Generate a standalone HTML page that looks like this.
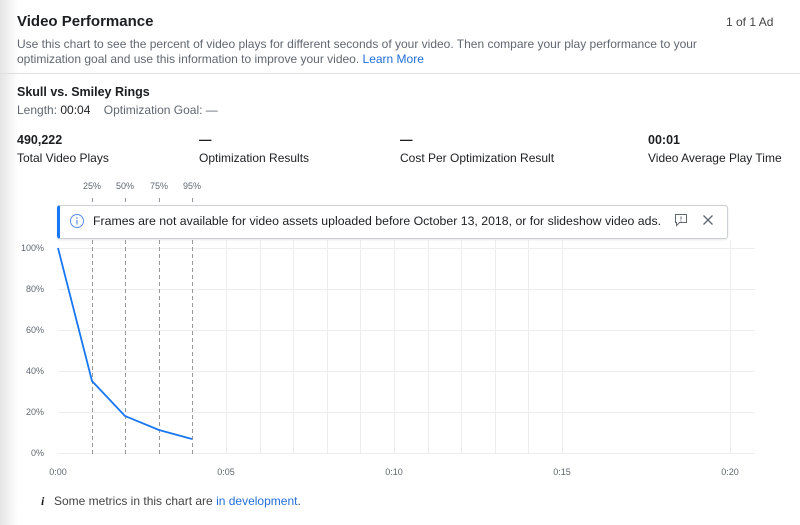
<!DOCTYPE html>
<html><head><style>
body{margin:0;width:800px;height:525px;overflow:hidden;background:#fff;font-family:"Liberation Sans",sans-serif;color:#1c1e21;position:relative}
.sh{position:absolute;left:0;top:0;width:18px;height:525px;background:linear-gradient(90deg,#e4e4e4,#fff)}
.a{position:absolute;white-space:nowrap}
.g{color:#606770}
.b{font-weight:bold}
a{color:#216fdb;text-decoration:none}
</style></head><body>
<div class="sh"></div>
<div class="a b" style="left:17px;top:13px;font-size:15px">Video Performance</div>
<div class="a" style="left:726px;top:15px;font-size:12px;color:#444">1 of 1 Ad</div>
<div class="a g" style="left:17px;top:37px;font-size:12px;line-height:15px">Use this chart to see the percent of video plays for different seconds of your video. Then compare your play performance to your<br>optimization goal and use this information to improve your video. <a>Learn More</a></div>
<div class="a" style="left:0;top:73px;width:800px;height:1px;background:#dddfe2"></div>
<div class="a b" style="left:17px;top:85px;font-size:12.5px">Skull vs. Smiley Rings</div>
<div class="a g" style="left:17px;top:103px;font-size:12px">Length: <span style="color:#1c1e21">00:04</span> &nbsp;&nbsp; Optimization Goal: —</div>
<div class="a b" style="left:17px;top:133px;font-size:12.5px">490,222</div>
<div class="a" style="left:17px;top:151px;font-size:12px">Total Video Plays</div>
<div class="a b" style="left:199px;top:133px;font-size:12.5px">—</div>
<div class="a" style="left:199px;top:151px;font-size:12px">Optimization Results</div>
<div class="a b" style="left:400px;top:133px;font-size:12.5px">—</div>
<div class="a" style="left:400px;top:151px;font-size:12px">Cost Per Optimization Result</div>
<div class="a b" style="left:648px;top:133px;font-size:12.5px">00:01</div>
<div class="a" style="left:648px;top:151px;font-size:12px">Video Average Play Time</div>
<svg class="a" style="left:0;top:0" width="800" height="525">
<g stroke="#ededed" stroke-width="1">
<line x1="58" y1="248.5" x2="755" y2="248.5"/><line x1="58" y1="289.5" x2="755" y2="289.5"/><line x1="58" y1="330.5" x2="755" y2="330.5"/><line x1="58" y1="371.5" x2="755" y2="371.5"/><line x1="58" y1="412.5" x2="755" y2="412.5"/><line x1="58" y1="453.5" x2="755" y2="453.5"/>
<line x1="226.5" y1="240" x2="226.5" y2="453"/><line x1="260.5" y1="240" x2="260.5" y2="453"/><line x1="293.5" y1="240" x2="293.5" y2="453"/><line x1="327.5" y1="240" x2="327.5" y2="453"/><line x1="360.5" y1="240" x2="360.5" y2="453"/><line x1="394.5" y1="240" x2="394.5" y2="453"/><line x1="428.5" y1="240" x2="428.5" y2="453"/><line x1="461.5" y1="240" x2="461.5" y2="453"/><line x1="495.5" y1="240" x2="495.5" y2="453"/><line x1="528.5" y1="240" x2="528.5" y2="453"/><line x1="562.5" y1="240" x2="562.5" y2="453"/><line x1="730.5" y1="240" x2="730.5" y2="453"/>
</g>
<g stroke="#999" stroke-dasharray="4,3" stroke-width="1">
<line x1="92.5" y1="198" x2="92.5" y2="454"/><line x1="125.5" y1="198" x2="125.5" y2="454"/><line x1="159.5" y1="198" x2="159.5" y2="454"/><line x1="192.5" y1="198" x2="192.5" y2="454"/>
</g>
<polyline points="58,248 92,381 125,416 159,430 192,439" fill="none" stroke="#1877f2" stroke-width="1.8"/>
<g font-family="Liberation Sans" font-size="9" fill="#606770">
<g text-anchor="middle"><text x="92" y="189">25%</text><text x="125" y="189">50%</text><text x="159" y="189">75%</text><text x="192" y="189">95%</text></g>
<g text-anchor="end"><text x="44" y="251">100%</text><text x="44" y="292">80%</text><text x="44" y="333">60%</text><text x="44" y="374">40%</text><text x="44" y="415">20%</text><text x="44" y="456">0%</text></g>
<g text-anchor="middle"><text x="58" y="475">0:00</text><text x="226" y="475">0:05</text><text x="394" y="475">0:10</text><text x="562" y="475">0:15</text><text x="730" y="475">0:20</text></g>
</g>
</svg>
<div class="a" style="left:57px;top:205px;width:667px;height:32px;background:#fff;border:1px solid #ccd0d5;border-left:3px solid #1877f2;border-radius:3px;box-shadow:0 1px 2px rgba(0,0,0,.1)"></div>
<svg class="a" style="left:69px;top:213px" width="16" height="16"><circle cx="8" cy="8" r="6.5" fill="none" stroke="#5b8def" stroke-width="1"/><line x1="8" y1="7" x2="8" y2="11.5" stroke="#5b8def" stroke-width="1.2"/><circle cx="8" cy="5" r=".8" fill="#5b8def"/></svg>
<div class="a" style="left:93px;top:214px;font-size:12.3px">Frames are not available for video assets uploaded before October 13, 2018, or for slideshow video ads.</div>
<svg class="a" style="left:674px;top:213px" width="14" height="14"><path d="M1.5 1.5h11v8h-7l-3 3v-3h-1z" fill="none" stroke="#606770"/><line x1="7" y1="3.5" x2="7" y2="6.5" stroke="#606770"/><circle cx="7" cy="8" r=".6" fill="#606770"/></svg>
<svg class="a" style="left:702px;top:214px" width="12" height="12"><path d="M1.5 1.5l9 9M10.5 1.5l-9 9" stroke="#606770" stroke-width="1.3"/></svg>
<div class="a" style="left:41px;top:494px;font-size:12px;font-style:italic;font-weight:bold;font-family:'Liberation Serif',serif">i</div>
<div class="a" style="left:54px;top:494px;font-size:12px;color:#444">Some metrics in this chart are <a>in development</a>.</div>
</body></html>
